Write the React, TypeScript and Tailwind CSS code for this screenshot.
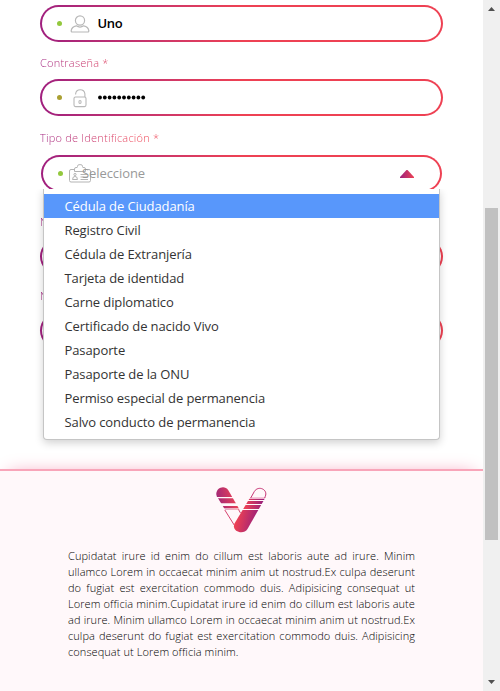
import React from "react";

const options = [
  "Cédula de Ciudadanía",
  "Registro Civil",
  "Cédula de Extranjería",
  "Tarjeta de identidad",
  "Carne diplomatico",
  "Certificado de nacido Vivo",
  "Pasaporte",
  "Pasaporte de la ONU",
  "Permiso especial de permanencia",
  "Salvo conducto de permanencia",
];

function Field({ dot, icon, children }: { dot?: string; icon?: React.ReactNode; children?: React.ReactNode }) {
  return (
    <div className="h-[37px] w-[403px] rounded-[19px] bg-linear-to-r from-[#a01f7e] to-[#ee4153] to-50% p-[2px]">
      <div className="flex h-full items-center rounded-[17px] bg-white pl-[15px]">
        {dot && <span className={"size-[5px] shrink-0 rounded-full " + dot} />}
        <span className="ml-[7px] flex w-[22px] shrink-0 justify-center">{icon}</span>
        {children}
      </div>
    </div>
  );
}

function Label({ children, className }: { children: React.ReactNode; className: string }) {
  return (
    <div className="flex h-4">
      <span className={"bg-linear-to-r from-[#a01f7e] bg-clip-text text-[11px] leading-4 font-light whitespace-nowrap text-transparent " + className}>
        {children}
      </span>
    </div>
  );
}

function UserIcon() {
  return (
    <svg width="20" height="18" viewBox="0 0 20 18" fill="none" stroke="#b8b8b8" strokeWidth="1.2">
      <circle cx="10" cy="5.5" r="4.6" />
      <path d="M6.3 10.8C3.2 11.4 1.5 13.4 1.2 15.6Q1 17 2.3 17H17.7Q19 17 18.8 15.6C18.5 13.4 16.8 11.4 13.7 10.8Q10 13.3 6.3 10.8Z" />
    </svg>
  );
}

function LockIcon() {
  return (
    <svg width="16" height="20" viewBox="0 0 16 20" fill="none" stroke="#b8b8b8" strokeWidth="1.1">
      <rect x="2" y="9" width="12" height="9.6" rx="1.5" />
      <path d="M3.6 6.5V5.8a4.7 4.7 0 0 1 9.3 0V9" />
      <ellipse cx="8" cy="14" rx="1.1" ry="1.5" />
    </svg>
  );
}

function CardIcon() {
  return (
    <svg width="24" height="19" viewBox="0 0 24 19" fill="none" stroke="#b4b4b4">
      <path d="M6 5.5H3Q1.5 5.5 1.5 7V16.5Q1.5 18 3 18H21Q22.5 18 22.5 16.5V7Q22.5 5.5 21 5.5H18" />
      <path d="M6.5 7.5V5Q6.5 3.5 8 3.5H9Q9.5 3.5 9.5 2.5Q9.5 .7 11 .7H13Q14.5 .7 14.5 2.5Q14.5 3.5 15 3.5H16Q17.5 3.5 17.5 5V7.5Z" />
      <circle cx="7" cy="10.5" r="1.1" />
      <path d="M4.5 15.5L5.3 13Q7 12 8.7 13L9.5 15.5ZM12.5 10.5H20M12.5 13H20M12.5 15.5H20" />
    </svg>
  );
}

function Logo() {
  return (
    <svg className="shrink-0" width="51" height="46" viewBox="0 0 51 46">
      <defs>
        <linearGradient id="leftArm" gradientUnits="userSpaceOnUse" x1="0" y1="12" x2="21" y2="7">
          <stop stopColor="#9f2678" />
          <stop offset="1" stopColor="#f04453" />
        </linearGradient>
        <linearGradient id="rightArm" gradientUnits="userSpaceOnUse" x1="21" y1="28" x2="42" y2="33">
          <stop stopColor="#ee4153" />
          <stop offset="1" stopColor="#99207a" />
        </linearGradient>
        <linearGradient id="stripes" gradientUnits="userSpaceOnUse" x1="29" y1="0" x2="47" y2="0">
          <stop stopColor="#ec4155" />
          <stop offset="1" stopColor="#99207a" />
        </linearGradient>
        <clipPath id="leftShape">
          <path d="M.8 9.3C-2 2.5 7.5-3.3 12.3 3.2L25.5 26 19 39Z" />
        </clipPath>
        <clipPath id="rightShape">
          <path d="M38 4C42.5-3 53 2.5 49.7 10L31.5 42C27.5 48.5 15 44.5 18.5 36.5Z" />
        </clipPath>
      </defs>
      <g clipPath="url(#leftShape)" fill="url(#leftArm)">
        <path d="M0 0H30V10.1H0ZM0 11.3H30V16.3H0ZM0 19H30V21H0Z" />
        <path d="M0 21.3H30V22.8H0Z" opacity=".5" />
      </g>
      <path d="M8.8 23L18.5 38.5M22.5 22.5L24.5 26" stroke="#d6436f" fill="none" />
      <g clipPath="url(#rightShape)">
        <path fill="url(#rightArm)" d="M16 23H52V46H16Z" />
        <path fill="url(#stripes)" d="M16 18H52V22H16ZM16 14H52V17H16ZM16 12H52V13.1H16Z" />
        <path fill="#f0b7cf" d="M16 10.2H52V12H16Z" />
      </g>
      <path d="M34.7 11L38.4 4.4C42.5-2 52.2 2.6 49.3 9.3L48.7 11" stroke="#c63373" fill="none" />
    </svg>
  );
}

export default function App() {
  return (
    <div className="flex h-[691px] w-[500px] overflow-hidden bg-white font-['Open_Sans',sans-serif]">
      <main className="flex w-[483px] flex-col">
        <div className="relative flex h-[469px] shrink-0 flex-col pt-[5px] pl-10">
          <Field dot="bg-[#93c83d]" icon={<UserIcon />}>
            <span className="ml-[6.5px] pt-px text-[13px] font-semibold tracking-[-0.3px] text-black">Uno</span>
          </Field>
          <div className="mt-[13px]"><Label className="w-[75px] to-[#e33f5a] tracking-[0.22px]">Contraseña *</Label></div>
          <div className="mt-2">
            <Field dot="bg-[#aaa032]" icon={<LockIcon />}>
              <svg className="ml-[7px]" width="48" height="5" viewBox="0 0 48 5">
                {Array.from({ length: 10 }, (_, i) => <circle key={i} cx={2 + i * 4.8} cy="2.5" r="1.9" />)}
              </svg>
            </Field>
          </div>
          <div className="mt-[14px]"><Label className="w-[119px] to-[#ee4153] to-80% tracking-[0.22px]">Tipo de Identificación *</Label></div>
          <div className="mt-[9px] ml-px h-[37px] w-[401px] rounded-[19px] bg-linear-to-r from-[#a01f7e] to-[#ee4153] to-50% p-[2px]">
            <div className="flex h-full items-center rounded-[17px] bg-white pr-[26px] pl-[15px]">
              <span className="size-[5px] rounded-full bg-[#93c83d]" />
              <span className="ml-[5px]"><CardIcon /></span>
              <span className="-ml-[10px] text-[13px] tracking-[-0.08px] text-[#999]">Seleccione</span>
              <svg className="ml-auto" width="14" height="8" viewBox="0 0 14 8">
                <defs><linearGradient id="arrow"><stop stopColor="#9d227e" /><stop offset="1" stopColor="#ed4253" /></linearGradient></defs>
                <path d="M0 8V7L6.5 0H7.5L14 7V8Z" fill="url(#arrow)" />
              </svg>
            </div>
          </div>
          <div className="mt-[22px]"><Label className="w-3 to-[#a82879]">N</Label></div>
          <div className="mt-2"><Field /></div>
          <div className="mt-[13px]"><Label className="w-3 to-[#a82879]">N</Label></div>
          <div className="mt-2"><Field /></div>
          <ul className="absolute top-[189px] left-[43px] z-10 h-[251px] w-[397px] rounded-b-[4px] border border-t-0 border-[#c5c5c5] bg-white pt-[5px] shadow-[0_3px_8px_rgba(0,0,0,0.18)] [clip-path:inset(0_-12px_-15px_-12px)]">
            {options.map((option, i) => (
              <li key={option} className={"h-6 pl-[20.5px] text-[13px] leading-6 tracking-[-0.1px] " + (i === 0 ? "bg-[#5897fb] text-white" : "text-[#333]")}>
                {option}
              </li>
            ))}
          </ul>
        </div>
        <footer className="flex flex-1 flex-col items-center border-t-2 border-[#f8a5b9] bg-[#fff8fa] pt-4 shadow-[0_-3px_18px_-9px_#f080a5]">
          <Logo />
          <p className="mt-[15px] w-[347px] text-justify text-[11px] leading-4 font-light tracking-[0.07px] text-black">
            Cupidatat irure id enim do cillum est laboris aute ad irure. Minim ullamco Lorem in occaecat minim anim ut nostrud.Ex culpa deserunt do fugiat est exercitation commodo duis. Adipisicing consequat ut Lorem officia minim.Cupidatat irure id enim do cillum est laboris aute ad irure. Minim ullamco Lorem in occaecat minim anim ut nostrud.Ex culpa deserunt do fugiat est exercitation commodo duis. Adipisicing consequat ut Lorem officia minim.
          </p>
        </footer>
      </main>
      <aside className="z-20 flex w-[17px] flex-col items-center bg-[#f0f0f0]">
        <svg className="mt-[7px]" width="7" height="4" viewBox="0 0 7 4"><path d="M0 4L3.5 0L7 4Z" fill="#505050" /></svg>
        <div className="mt-[197px] h-[332px] w-[13px] bg-[#c1c1c1]" />
        <svg className="mt-auto mb-[7px]" width="7" height="4" viewBox="0 0 7 4"><path d="M0 0L3.5 4L7 0Z" fill="#505050" /></svg>
      </aside>
    </div>
  );
}
